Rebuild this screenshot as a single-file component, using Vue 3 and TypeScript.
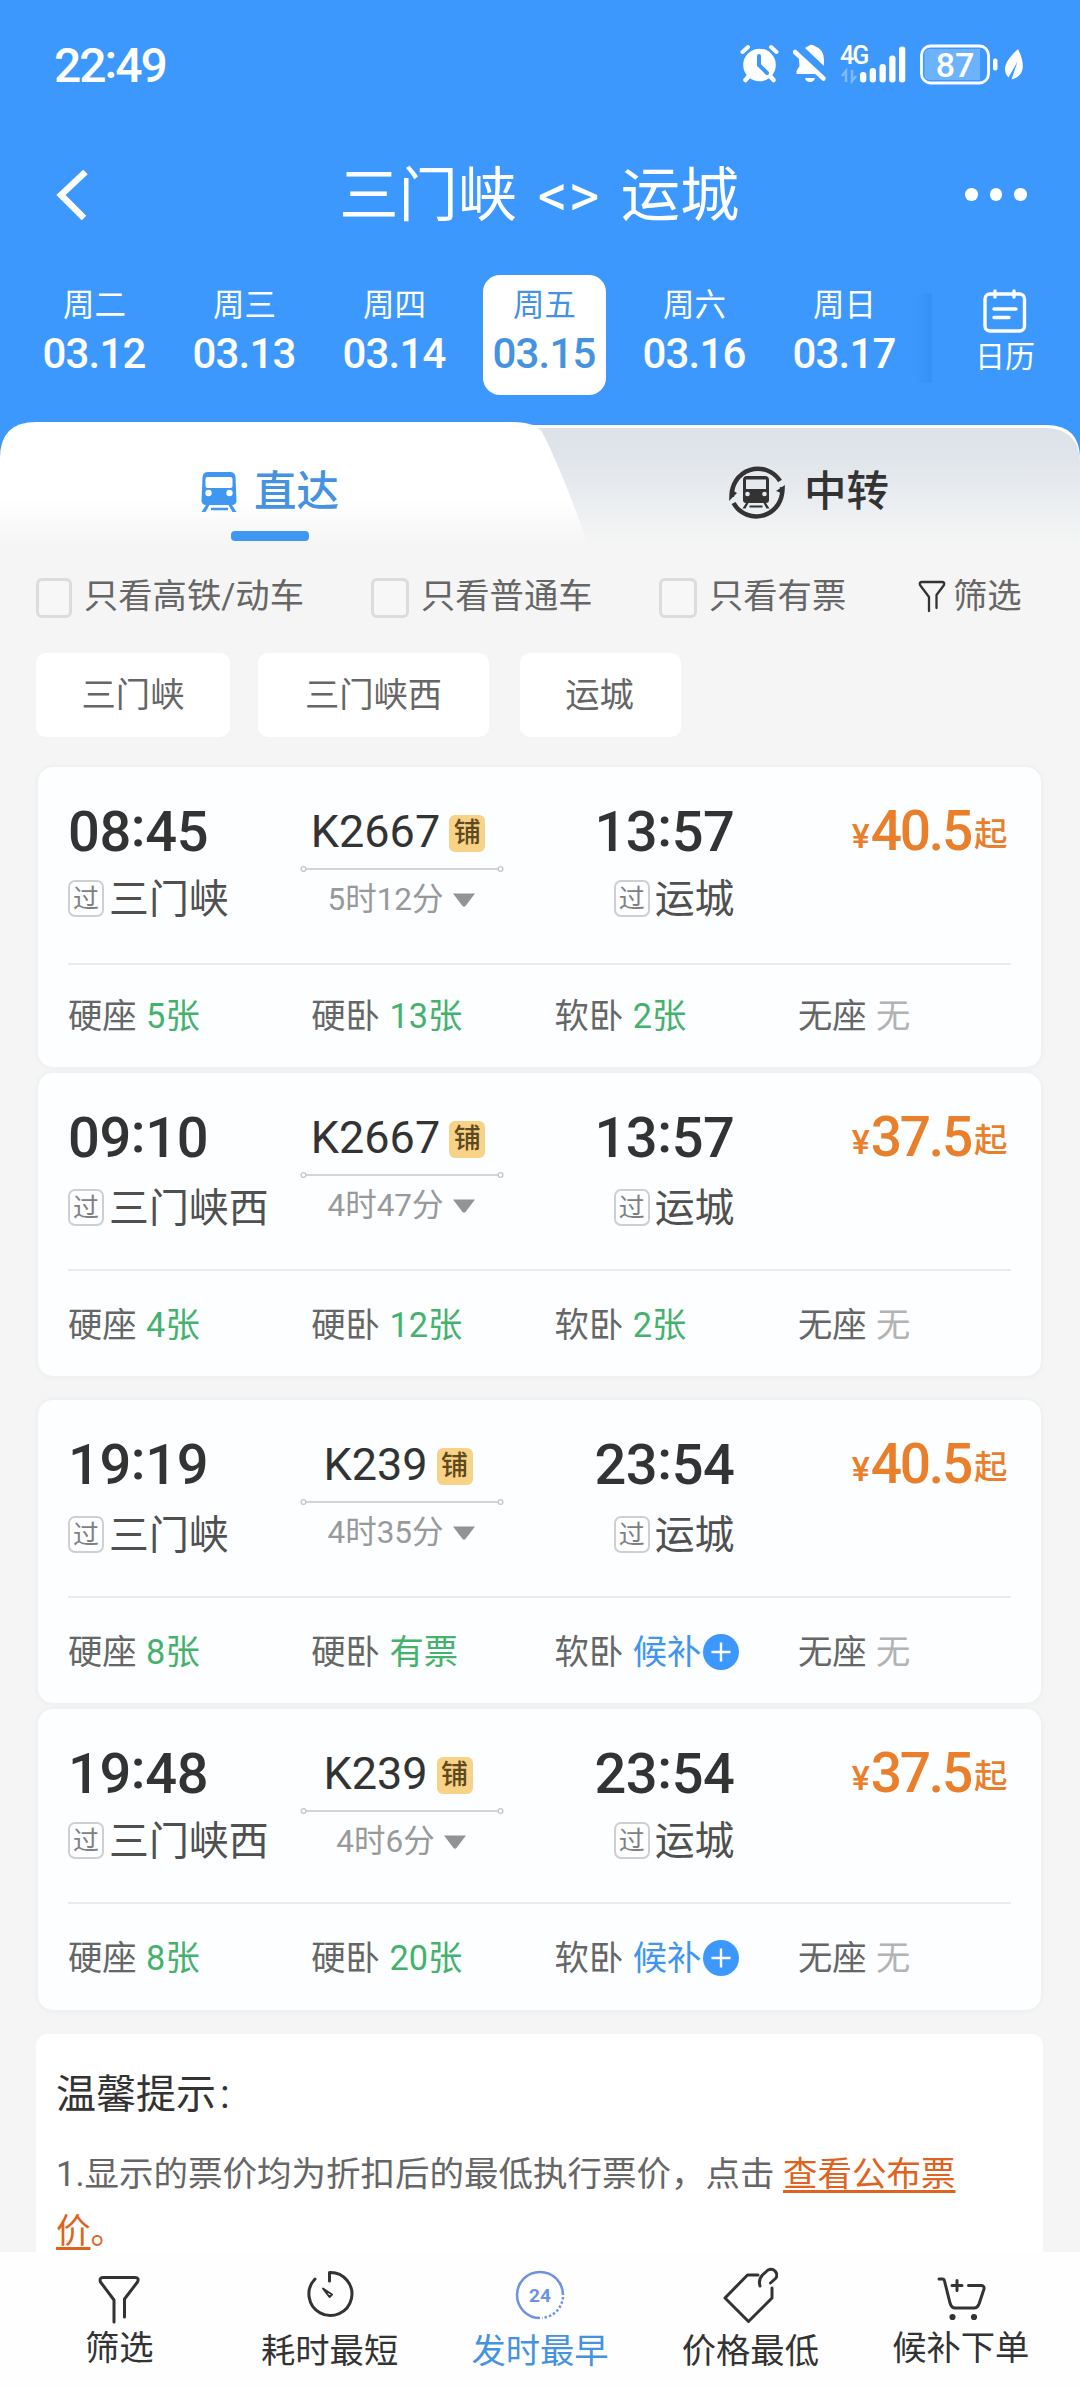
<script setup lang="ts">
interface Day { week: string; date: string; active?: boolean }
interface Seat { name: string; value: string; kind: 'ok' | 'wait' | 'none' }
interface Train {
  depart: string; from: string; code: string; duration: string
  arrive: string; to: string; price: string; spacing: string; seats: Seat[]
}

const days: Day[] = [
  { week: '周二', date: '03.12' },
  { week: '周三', date: '03.13' },
  { week: '周四', date: '03.14' },
  { week: '周五', date: '03.15', active: true },
  { week: '周六', date: '03.16' },
  { week: '周日', date: '03.17' },
]

const stations = ['三门峡', '三门峡西', '运城']

const seat = (name: string, value: string, kind: Seat['kind'] = 'ok'): Seat => ({ name, value, kind })

const trains: Train[] = [
  {
    depart: '08:45', from: '三门峡', code: 'K2667', duration: '5时12分', arrive: '13:57', to: '运城', price: '40.5', spacing: 'first',
    seats: [seat('硬座', '5张'), seat('硬卧', '13张'), seat('软卧', '2张'), seat('无座', '无', 'none')],
  },
  {
    depart: '09:10', from: '三门峡西', code: 'K2667', duration: '4时47分', arrive: '13:57', to: '运城', price: '37.5', spacing: 'tall joined',
    seats: [seat('硬座', '4张'), seat('硬卧', '12张'), seat('软卧', '2张'), seat('无座', '无', 'none')],
  },
  {
    depart: '19:19', from: '三门峡', code: 'K239', duration: '4时35分', arrive: '23:54', to: '运城', price: '40.5', spacing: 'tall apart',
    seats: [seat('硬座', '8张'), seat('硬卧', '有票'), seat('软卧', '候补', 'wait'), seat('无座', '无', 'none')],
  },
  {
    depart: '19:48', from: '三门峡西', code: 'K239', duration: '4时6分', arrive: '23:54', to: '运城', price: '37.5', spacing: 'joined last',
    seats: [seat('硬座', '8张'), seat('硬卧', '20张'), seat('软卧', '候补', 'wait'), seat('无座', '无', 'none')],
  },
]
</script>

<template>
  <div class="app">
    <header class="head">
      <div class="status">
        <div class="clock">22<span class="colon">:</span>49</div>
        <svg class="status-icons" width="290" height="44" viewBox="0 0 290 44" fill="#fff">
          <g>
            <circle cx="20.5" cy="24" r="16.3" />
            <path d="M3.500 11 9 6M32 6 37.500 11" stroke="#fff" stroke-width="4" stroke-linecap="round" fill="none" />
            <path d="M10 35 6.500 39M31 35 34.500 39" stroke="#fff" stroke-width="4.500" stroke-linecap="round" />
            <path d="M20 15v9l8 8" stroke="#3c98fd" stroke-width="4" stroke-linecap="round" stroke-linejoin="round" fill="none" />
          </g>
          <g>
            <path d="M59.500 13 81 33H57.500v-3l3-5zM66 7Q68 5.500 69.500 5q3-2.500 6 0 9.500 3 9.500 14v6L66 7zM66 37h10q-1 4-5 4t-5-4z" />
            <path d="M56 11 84.500 37.500" stroke="#fff" stroke-width="4.500" stroke-linecap="round" />
            <path d="M63 10.500 86 31.500" stroke="#3c98fd" stroke-width="2.200" />
          </g>
          <text x="101" y="23" class="net">4G</text>
          <path d="M107 41V30l-4 5M113 29v11l4-5" stroke="#fff" stroke-width="2.500" opacity=".35" fill="none" />
          <rect x="121" y="31" width="6.300" height="10.500" rx="3" />
          <rect x="130.700" y="27" width="6.300" height="14.500" rx="3" />
          <rect x="140.500" y="23" width="6.300" height="18.500" rx="3" />
          <rect x="150.200" y="14.500" width="6.300" height="27" rx="3" />
          <rect x="160" y="5.500" width="6.300" height="36" rx="3" />
          <rect x="182.500" y="5" width="67" height="37" rx="9" fill="none" stroke="#fff" stroke-width="2.800" />
          <path d="M191 8h50v31h-50q-5.500 0-5.500-5.500V13.500q0-5.500 5.500-5.500z" opacity=".25" />
          <text x="216" y="35.500" class="battery" text-anchor="middle">87</text>
          <rect x="254" y="17.500" width="4.500" height="12" rx="2" />
          <path d="M279 8q6 12 4.500 20t-11 10.500l6-18-9 16q-5-5-3-12t12.500-16.500z" />
        </svg>
      </div>

      <div class="titlebar">
        <svg class="back" width="34" height="50" viewBox="0 0 34 50">
          <path d="M30.500 2 6 25 29 48" fill="none" stroke="#fff" stroke-width="6.500" />
        </svg>
        <h1>三门峡 <span class="swap">&lt;&gt;</span> 运城</h1>
        <div class="more"><i /><i /><i /></div>
      </div>

      <div class="dates">
        <div v-for="d in days" :key="d.date" class="day" :class="{ active: d.active }">
          <span class="week">{{ d.week }}</span>
          <span class="date">{{ d.date }}</span>
        </div>
        <div class="edge" />
        <div class="calendar">
          <svg width="44" height="44" viewBox="0 0 44 44" fill="none" stroke="#fff" stroke-width="3.400" stroke-linecap="round">
            <rect x="2" y="5" width="39.500" height="37" rx="5" />
            <path d="M12 2v6M31 2v6M11 20h22M11 28.500h15" />
          </svg>
          <span>日历</span>
        </div>
      </div>
    </header>

    <nav class="tabs">
      <svg class="tab-shapes" width="1080" height="128" viewBox="0 0 1080 128">
        <defs>
          <linearGradient id="idle" x1="0" y1="0" x2="0" y2="1">
            <stop offset="0" stop-color="#dde2e9" />
            <stop offset=".25" stop-color="#e0e5eb" />
            <stop offset=".7" stop-color="#eceff2" />
            <stop offset="1" stop-color="#f5f5f5" />
          </linearGradient>
          <linearGradient id="current" x1="0" y1="0" x2="0" y2="1">
            <stop offset=".6" stop-color="#fff" />
            <stop offset=".95" stop-color="#f5f5f5" />
          </linearGradient>
        </defs>
        <path d="M0 36H1080V128H0z" fill="#f5f5f5" />
        <path d="M400 3H1046Q1080 3 1080 37V60H400z" fill="#fff" />
        <path d="M400 6H1045Q1078 6 1080 39V122H400z" fill="url(#idle)" />
        <path d="M0 128V36Q0 0 36 0H514Q534 0 542 10 560 44 588 122L590 128z" fill="url(#current)" />
      </svg>
      <div class="tab direct">
        <svg width="36" height="40" viewBox="0 0 36 40">
          <path d="M7 0H29Q34 0 34.500 5L35.500 29Q35 33 31 33L35.500 40H31.500L27.500 33H8.500L4.500 40H.5L5 33Q1 33 .5 29L1.500 5Q2 0 7 0z" fill="#3f97f2" />
          <rect x="4.500" y="5" width="27" height="11" rx="2" fill="#fff" />
          <circle cx="7.500" cy="21" r="3.200" fill="#fff" /><circle cx="28.500" cy="21" r="3.200" fill="#fff" />
          <path d="M10 37H27" stroke="#3f97f2" stroke-width="2.500" />
        </svg>
        <span>直达</span>
      </div>
      <div class="tab transfer">
        <svg width="58" height="58" viewBox="0 0 58 58">
          <g fill="none" stroke="#333" stroke-width="4.500">
            <path d="M4 34A26 26 0 0 1 52 18" />
            <path d="M5.500 40A26 26 0 0 0 54 24" />
          </g>
          <path d="M1 38 2 26 9 30zM57 22 56 31 48 28z" fill="#333" />
          <path d="M19 13H37Q41 13 41 17V37Q41 40 38 40L41.500 45.500H38.500L35.500 40H20.500L17.500 45.500H14.500L18 40Q15 40 15 37V17Q15 13 19 13z" fill="#333" />
          <path d="M18 16.500H38V26H18z" fill="#e6eaee" />
          <circle cx="19.500" cy="31" r="2.300" fill="#e6eaee" /><circle cx="36.500" cy="31" r="2.300" fill="#e6eaee" />
          <path d="M21.500 43.500H34.500" stroke="#333" stroke-width="2" />
        </svg>
        <span>中转</span>
      </div>
      <i class="underline" />
    </nav>

    <section class="filters">
      <label class="check c1"><i />只看高铁/动车</label>
      <label class="check c2"><i />只看普通车</label>
      <label class="check c3"><i />只看有票</label>
      <div class="sift">
        <svg width="28" height="33" viewBox="0 0 28 33" fill="none" stroke="#333" stroke-width="2.300" stroke-linecap="round" stroke-linejoin="round">
          <path d="M11 31V17L2 5Q1 2 4 2H24Q27 2 26 5L18.500 15V28" />
        </svg>
        筛选
      </div>
    </section>

    <section class="chips">
      <span v-for="(s, i) in stations" :key="s" class="chip" :class="'chip' + i">{{ s }}</span>
    </section>

    <main class="content">
      <article v-for="t in trains" :key="t.depart" class="card" :class="t.spacing">
        <div class="trip">
          <div class="stop">
            <div class="time">{{ t.depart.slice(0, 2) }}<span class="colon">:</span>{{ t.depart.slice(3) }}</div>
            <div class="station"><b>过</b>{{ t.from }}</div>
          </div>
          <div class="middle">
            <div class="code">{{ t.code }}<b>铺</b></div>
            <svg class="rail" width="204" height="8" viewBox="0 0 204 8" fill="none" stroke="#c6c6c8" stroke-width="1.300">
              <path d="M6 4H198" /><circle cx="3.500" cy="4" r="2.400" /><circle cx="200.500" cy="4" r="2.400" />
            </svg>
            <div class="duration">{{ t.duration }}<svg width="22" height="15" viewBox="0 0 22 15"><path d="M0 .5H22L12.500 13Q11 14.500 9.500 13z" fill="#939393" /></svg></div>
          </div>
          <div class="stop end">
            <div class="time">{{ t.arrive.slice(0, 2) }}<span class="colon">:</span>{{ t.arrive.slice(3) }}</div>
            <div class="station"><b>过</b>{{ t.to }}</div>
          </div>
          <div class="price"><small>¥</small><strong>{{ t.price }}</strong><em>起</em></div>
        </div>
        <div class="seats">
          <div v-for="s in t.seats" :key="s.name" class="seat">
            {{ s.name }}<span :class="s.kind">{{ s.value }}</span>
            <svg v-if="s.kind === 'wait'" width="36" height="36" viewBox="0 0 36 36">
              <circle cx="18" cy="18" r="18" fill="#3c98fc" />
              <path d="M18 8.500V27.500M8.500 18H27.500" stroke="#fff" stroke-width="2.400" />
            </svg>
          </div>
        </div>
      </article>

      <section class="tips">
        <h2>温馨提示<span>:</span></h2>
        <p>1.显示的票价均为折扣后的最低执行票价，点击 <span class="link"><u>查看公布票<br>价</u>。</span></p>
      </section>
    </main>

    <footer class="bar">
      <div class="item raised">
        <svg width="56" height="58" viewBox="0 0 56 58" class="ink">
          <path d="M23 56V34L9.500 16Q8 11.500 12 11.500H44Q48.500 11.500 46.500 16L33.500 33V51" />
        </svg>
        <span>筛选</span>
      </div>
      <div class="item">
        <svg width="56" height="58" viewBox="0 0 56 58" class="ink">
          <path d="M13 13A21.500 21.500 0 1 0 27.500 6.500V15" /><path d="M21 22.500 27.500 31 30 28.500z" stroke-width="2" />
        </svg>
        <span>耗时最短</span>
      </div>
      <div class="item on">
        <svg width="56" height="58" viewBox="0 0 56 58" fill="none" stroke="#6d93e0" stroke-width="2.500">
          <path d="M28 52A23 23 0 1 1 51 29" />
          <path d="M51 31A23 23 0 0 1 30 52" stroke-dasharray="2.500 2" />
          <text x="28" y="35.500" text-anchor="middle" class="hours">24</text>
        </svg>
        <span>发时最早</span>
      </div>
      <div class="item">
        <svg width="56" height="58" viewBox="0 0 56 58" class="ink">
          <path d="M36 9H25.500L3 32 26.500 55.500 50 32V22" />
          <path d="M38 20Q36 14 40.500 9L46 4Q50 2 53 5 56.500 9 53.500 12.500L48.500 17" />
        </svg>
        <span>价格最低</span>
      </div>
      <div class="item raised">
        <svg width="56" height="58" viewBox="0 0 56 58" class="ink">
          <path d="M6 13H9.500Q11 13 11.500 15L17 37Q18.500 42 22 42H41Q44.500 42 46 38L51 23Q51.500 19.500 48 19.500H35.500M24 14.500V24.500M19 19.500H29" />
          <circle cx="19.500" cy="51" r="1.600" fill="#333" /><circle cx="41" cy="51" r="1.600" fill="#333" />
        </svg>
        <span>候补下单</span>
      </div>
    </footer>
  </div>
</template>

<style>
body { background: #f5f5f5; }
</style>

<style scoped>
.app {
  width: 1080px; height: 2388px; overflow: hidden; display: flex; flex-direction: column;
  background: #f5f5f5; color: #333;
  font-family: Roboto, "Noto Sans CJK SC", sans-serif; font-size: 34.3px;
}
.app * { box-sizing: border-box; }
i, em, b { font-style: normal; font-weight: 400; }
svg { flex: none; display: block; }
.colon { vertical-align: .09em; line-height: 0; }

.head { height: 422px; flex: none; background: #3c98fc; color: #fff; box-shadow: 0 40px 0 #3c98fc; }
.status { height: 130px; display: flex; justify-content: space-between; padding: 0 51px 0 54px; }
.clock { font-size: 48px; font-weight: 500; line-height: 60px; padding-top: 36px; letter-spacing: -2px; }
.status-icons { margin-top: 41px; }
.net { font: 500 25px Roboto, sans-serif; letter-spacing: -2px; }
.battery { font: 500 34px Roboto, sans-serif; }

.titlebar { height: 129px; display: flex; align-items: center; justify-content: space-between; padding: 0 53px 0 55px; }
h1 { margin: 0; font-size: 59.300px; font-weight: 400; line-height: 80px; white-space: pre; padding: 3px 0 0 24px; word-spacing: 6px; }
.swap { letter-spacing: .5px; }
.more { display: flex; gap: 12px; }
.more i { width: 12.500px; height: 12.500px; border-radius: 50%; background: #fff; }

.dates { display: flex; padding: 16px 0 0 33px; }
.day { width: 123px; flex: none; height: 120px; margin-right: 27px; padding-top: 11px; display: flex; flex-direction: column; align-items: center; border-radius: 17px; }
.day.active { background: #fff; color: #4593e0; }
.week { font-size: 31.500px; line-height: 40px; }
.date { font-size: 42px; font-weight: 500; line-height: 50px; margin: 3px 0 0 -1px; letter-spacing: -.800px; }
.edge { width: 17px; height: 90px; margin: 18px 0 0 -18px; border-radius: 8px 0 0 8px; background: linear-gradient(90deg, rgba(45, 135, 235, 0), rgba(45, 135, 235, .45)); }
.calendar { margin: 14px 0 0 42px; width: 62px; display: flex; flex-direction: column; align-items: center; font-size: 30px; line-height: 40px; }
.calendar span { margin-top: 4px; }

.tabs { position: relative; height: 128px; flex: none; display: flex; }
.tab-shapes { position: absolute; inset: 0; }
.tab { position: relative; display: flex; align-items: center; height: 60px; margin-top: 39px; font-size: 42.500px; font-weight: 500; }
.tab span { margin-top: -7px; }
.direct { width: 540px; padding: 0 0 0 201px; color: #4593e0; gap: 17px; }
.direct svg, .transfer svg { margin-top: 2px; }
.transfer { padding-left: 188px; gap: 18px; }
.underline { position: absolute; left: 231px; top: 109px; width: 78px; height: 9.500px; border-radius: 4px; background: #3f97f2; }

.filters { height: 103px; flex: none; display: flex; align-items: flex-start; color: #666; line-height: 44px; padding: 24px 0 0 36px; }
.check { display: flex; white-space: nowrap; }
.check i { width: 36px; height: 40px; margin: 4px 12px 0 0; border: 3px solid #dcdcdc; border-radius: 6px; background: #f7f7f7; }
.c1 { width: 335px; } .c2 { width: 288px; } .c3 { width: 259px; }
.c2 i, .c3 i { width: 38px; }
.sift { display: flex; gap: 7px; }
.sift svg { margin-top: 6px; }

.chips { display: flex; flex: none; padding-left: 36px; }
.chip { height: 84px; background: #fff; border-radius: 10px; color: #666; line-height: 84px; text-align: center; }
.chip0 { width: 194px; } .chip1 { width: 231px; margin: 0 31px 0 28px; } .chip2 { width: 161px; padding-right: 2px; }

.content { flex: 1; overflow: hidden; padding-left: 38px; }
.card { width: 1003px; height: 300px; padding: 0 30px; border-radius: 15px; background: #fcfeff; box-shadow: 0 0 0 2px #f0f1f1, 0 1px 5px #e9eaea; }
.first { margin-top: 30px; }
.tall { height: 303px; }
.joined { margin-top: 6px; }
.apart { margin-top: 24px; }
.last { height: 301px; }
.trip { height: 198px; border-bottom: 2px solid #e9ebed; display: flex; padding-top: 34px; }
.last .trip { height: 195px; }
.stop { width: 233px; flex: none; }
.end { width: 231.500px; display: flex; flex-direction: column; align-items: flex-end; }
.time { font-size: 56px; font-weight: 500; line-height: 62px; height: 60px; letter-spacing: -.400px; white-space: nowrap; }
.station { height: 42px; line-height: 43px; margin-top: 17px; font-size: 39.900px; color: #505050; display: flex; white-space: nowrap; }
.tall .station { margin-top: 20px; }
.station b { width: 36px; height: 37px; margin: 2px 5px 0 0; border: 2px solid #cfcfd1; border-radius: 7px; font-size: 26px; line-height: 34px; text-align: center; color: #808080; }
.middle { width: 202px; flex: none; display: flex; flex-direction: column; align-items: center; }
.code { height: 60px; line-height: 62px; font-size: 45px; margin: 1px 8px -1px 0; display: flex; align-items: center; }
.code b { width: 36px; height: 37px; margin: 3px 0 0 9px; border-radius: 6px; background: #f8d286; color: #5f4920; font-size: 27px; font-weight: 500; line-height: 36px; text-align: center; }
.rail { margin-top: 4px; }
.duration { height: 42px; margin: 6px 2px 0 0; display: flex; align-items: center; gap: 9px; font-size: 31.500px; line-height: 42px; color: #999; }
.price { width: 276px; flex: none; height: 60px; padding-right: 3px; text-align: right; line-height: 60px; white-space: nowrap; color: #e97f2b; }
.price small { font-size: 34px; font-weight: 500; line-height: 0; vertical-align: 2px; }
.price strong { font-size: 55px; font-weight: 500; letter-spacing: -2.200px; margin-left: 1px; }
.price em { font-size: 33.500px; font-weight: 500; line-height: 0; vertical-align: 4px; margin-left: 3px; }
.seats { display: flex; padding-top: 28px; line-height: 46px; color: #666; }
.tall .seats { padding-top: 31px; }
.last .seats { padding-top: 31px; }
.seat { width: 243.300px; flex: none; display: flex; white-space: nowrap; }
.seat span { margin-left: 9.500px; }
.seat svg { margin: 5px 0 0 2px; }
.ok { color: #44b26c; } .wait { color: #4095f0; } .none { color: #b3b3b3; }

.tips { width: 1007px; height: 300px; margin: 24px 0 0 -2px; background: #fff; border-radius: 12px; padding: 36px 20px 0 20px; }
h2 { margin: 0; font-size: 40px; font-weight: 400; line-height: 50px; }
h2 span { margin-left: 4px; }
p { margin: 26px 0 0; font-size: 34.500px; line-height: 57px; color: #666; white-space: nowrap; }
.link { color: #df6220; }
.link u { text-decoration-thickness: 3px; text-underline-offset: 4px; }

.bar { height: 136px; flex: none; background: #fefefe; display: flex; padding: 0 14px; }
.item { width: 210.400px; display: flex; flex-direction: column; align-items: center; padding-top: 14px; line-height: 44px; }
.item span { margin-top: 5px; }
.raised span { margin-top: 2px; }
.on { color: #4593e0; }
.ink { fill: none; stroke: #333; stroke-width: 3; stroke-linecap: round; stroke-linejoin: round; }
.hours { font: 700 19px Roboto, sans-serif; fill: #6d93e0; stroke: none; }
</style>
